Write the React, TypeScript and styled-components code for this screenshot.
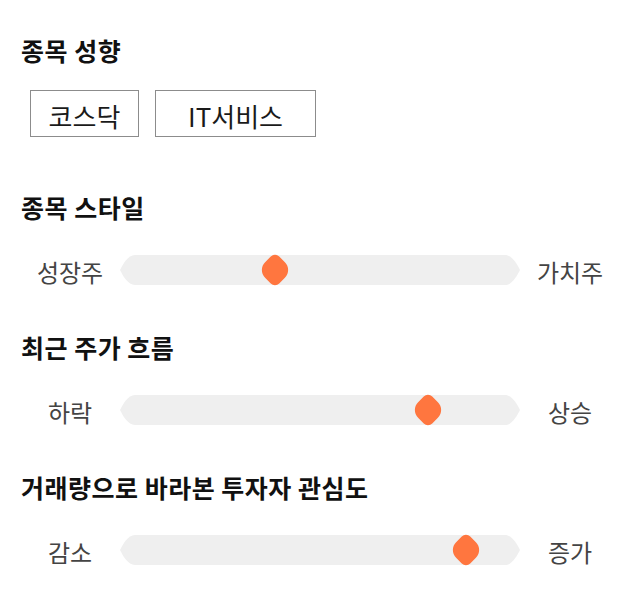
import React from 'react';
import styled, { createGlobalStyle } from 'styled-components';

const GlobalStyle = createGlobalStyle`
  html, body {
    margin: 0;
    padding: 0;
    background: #ffffff;
  }
  body {
    font-family: "Noto Sans CJK KR", "Noto Sans", sans-serif;
  }
`;

const Page = styled.div`
  width: 640px;
  box-sizing: border-box;
  padding: 34px 20px 0;
  display: flex;
  flex-direction: column;
`;

const Section = styled.section<{ $gap: number }>`
  display: flex;
  flex-direction: column;
  margin-bottom: ${(p) => p.$gap}px;
`;

const Title = styled.h2`
  margin: 0 0 24px 1px;
  font-size: 25px;
  line-height: 32px;
  letter-spacing: 0.5px;
  font-weight: 700;
  color: #111111;
`;

const ChipRow = styled.div`
  display: flex;
  gap: 16px;
  padding-left: 10px;
`;

const Chip = styled.button<{ $w: number }>`
  width: ${(p) => p.$w}px;
  height: 47px;
  box-sizing: border-box;
  border: 1px solid #8c8c8c;
  background: #ffffff;
  color: #1a1a1a;
  font-family: inherit;
  font-size: 26px;
  line-height: 1;
  padding: 4px 0 0;
  display: flex;
  align-items: center;
  justify-content: center;
`;

const SliderRow = styled.div`
  height: 46px;
  display: grid;
  grid-template-columns: 100px 400px 100px;
  align-items: center;
`;

const SideLabel = styled.span`
  text-align: center;
  font-size: 24px;
  line-height: 32px;
  padding-top: 3px;
  color: #444444;
`;

const Track = styled.div`
  position: relative;
  width: 400px;
  height: 30px;
`;

const TrackFill = styled.div`
  width: 400px;
  height: 30px;
  background: #efefef;
  clip-path: path('M15 0 H385 C392 0 397 9 400 15 C397 21 392 30 385 30 H15 C8 30 3 21 0 15 C3 9 8 0 15 0 Z');
`;

const Thumb = styled.div`
  position: absolute;
  top: 50%;
  width: 25px;
  height: 25px;
  background: #ff763f;
  border-radius: 6px 11px 6px 11px;
  transform: translate(-50%, -50%) rotate(45deg);
`;

type SliderProps = { left: string; right: string; at: number };

const Slider = ({ left, right, at }: SliderProps) => (
  <SliderRow>
    <SideLabel>{left}</SideLabel>
    <Track>
      <TrackFill />
      <Thumb style={{ left: `${at}px` }} />
    </Track>
    <SideLabel>{right}</SideLabel>
  </SliderRow>
);

export default function App() {
  return (
    <>
      <GlobalStyle />
      <Page>
        <Section $gap={54}>
          <Title>종목 성향</Title>
          <ChipRow>
            <Chip $w={109}>코스닥</Chip>
            <Chip $w={161}>IT서비스</Chip>
          </ChipRow>
        </Section>
        <Section $gap={38}>
          <Title>종목 스타일</Title>
          <Slider left="성장주" right="가치주" at={155} />
        </Section>
        <Section $gap={38}>
          <Title>최근 주가 흐름</Title>
          <Slider left="하락" right="상승" at={308} />
        </Section>
        <Section $gap={0}>
          <Title>거래량으로 바라본 투자자 관심도</Title>
          <Slider left="감소" right="증가" at={346} />
        </Section>
      </Page>
    </>
  );
}
